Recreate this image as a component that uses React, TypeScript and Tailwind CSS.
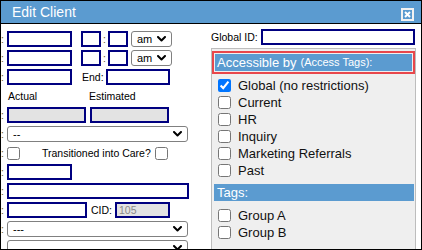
import React from "react";

const navyInput = "h-[16px] border-2 border-[#000080] bg-white";
const grayInput = "h-[16px] border-2 border-[#000080] bg-[#e3e3e3]";
const row = "flex h-[16px] shrink-0 items-center";

function Colon() {
    return <span className="w-[6px] shrink-0 text-[10.5px] leading-none text-[#6b5a2a]">:</span>;
}

function Select({ value, width }: { value: string; width: string }) {
    return (
        <div className={`${width} h-[16px] flex items-center justify-between rounded-[3px] border border-[#808080] bg-white pl-[5px] pr-[5px]`}>
            <span className="text-[11px] leading-none text-black">{value}</span>
            <svg width="9" height="6" viewBox="0 0 9 6" className="shrink-0">
                <path d="M1 1 L4.5 4.5 L8 1" fill="none" stroke="#000" strokeWidth="2" strokeLinecap="round" strokeLinejoin="round" />
            </svg>
        </div>
    );
}

function Check({ label, checked = false }: { label: string; checked?: boolean }) {
    return (
        <label className="flex h-[17px] items-center gap-[7px]">
            <input type="checkbox" defaultChecked={checked} className="m-0 h-[13px] w-[13px] shrink-0" />
            <span className="text-[13px] leading-none text-[#111]">{label}</span>
        </label>
    );
}

export default function App() {
    return (
        <div className="flex h-[250px] w-[422px] flex-col overflow-hidden border border-black bg-white font-['Liberation_Sans',Arial,sans-serif]">
            {/* Title bar */}
            <div className="flex h-[23px] shrink-0 items-center justify-between border-b border-black bg-[#5b9bd0] pl-[11px] pr-[7px]">
                <span className="text-[14px] leading-none text-white">Edit Client</span>
                <div className="mt-[4px] flex h-[13px] w-[13px] items-center justify-center border-2 border-[#f2f2f2] bg-[#5b9bd0]">
                    <svg width="7" height="7" viewBox="0 0 7 7">
                        <path d="M1 1 L6 6 M6 1 L1 6" stroke="#fff" strokeWidth="2" />
                    </svg>
                </div>
            </div>

            <div className="flex min-h-0 flex-1">
                {/* Left column */}
                <div className="flex w-[204px] shrink-0 flex-col gap-[3px] pt-[7px]">
                    <div className={row}>
                        <Colon />
                        <input className={`${navyInput} w-[65px]`} />
                        <input className={`${navyInput} ml-[9px] w-[20px]`} />
                        <span className="w-[7px] text-center text-[10.5px] leading-none text-[#6b5a2a]">:</span>
                        <input className={`${navyInput} w-[20px]`} />
                        <div className="ml-[3px]"><Select value="am" width="w-[41px]" /></div>
                    </div>
                    <div className={row}>
                        <Colon />
                        <input className={`${navyInput} w-[65px]`} />
                        <input className={`${navyInput} ml-[9px] w-[20px]`} />
                        <span className="w-[7px] text-center text-[10.5px] leading-none text-[#6b5a2a]">:</span>
                        <input className={`${navyInput} w-[20px]`} />
                        <div className="ml-[3px]"><Select value="am" width="w-[41px]" /></div>
                    </div>
                    <div className={row}>
                        <Colon />
                        <input className={`${navyInput} w-[65px]`} />
                        <span className="ml-[10px] w-[24px] text-[10.5px] leading-none text-black">End:</span>
                        <input className={`${navyInput} w-[64px]`} />
                    </div>
                    <div className="flex h-[16px] shrink-0 items-center pl-[7px] text-[10.5px] leading-none text-black">
                        <span className="w-[81px]">Actual</span>
                        <span>Estimated</span>
                    </div>
                    <div className={row}>
                        <Colon />
                        <input readOnly className={`${grayInput} w-[79px]`} />
                        <input readOnly className={`${grayInput} ml-[4px] w-[79px]`} />
                    </div>
                    <div className={row}>
                        <Colon />
                        <Select value="--" width="w-[181px]" />
                    </div>
                    <div className={row}>
                        <Colon />
                        <input type="checkbox" className="m-0 h-[13px] w-[13px]" />
                        <span className="ml-[22px] text-[10.5px] leading-none text-black">Transitioned into Care?</span>
                        <input type="checkbox" className="m-0 ml-[4px] h-[13px] w-[13px]" />
                    </div>
                    <div className={row}>
                        <Colon />
                        <input className={`${navyInput} w-[65px]`} />
                    </div>
                    <div className={row}>
                        <Colon />
                        <input className={`${navyInput} w-[182px]`} />
                    </div>
                    <div className={row}>
                        <Colon />
                        <input className={`${navyInput} w-[80px]`} />
                        <span className="ml-[4px] w-[24px] text-[10.5px] leading-none text-black">CID:</span>
                        <input readOnly value="105" className={`${grayInput} w-[55px] pl-[2px] text-[10.5px] text-[#8a8a8a]`} />
                    </div>
                    <div className={row}>
                        <Colon />
                        <Select value="---" width="w-[181px]" />
                    </div>
                    <div className={row}>
                        <span className="w-[6px] shrink-0" />
                        <Select value="" width="w-[181px]" />
                    </div>
                </div>

                {/* Right column */}
                <div className="ml-[6px] flex w-[205px] shrink-0 flex-col pt-[5px]">
                    <div className={row}>
                        <span className="w-[50px] text-[10.5px] leading-none text-black">Global ID:</span>
                        <input className="h-[16px] w-[154px] border-2 border-[#000080] bg-white" />
                    </div>
                    <div className="mt-[3px] h-[220px] shrink-0 border border-[#bdbdbd] bg-[#efefef] pt-[2px]">
                        <div className="border-2 border-[#e8474c] p-[1px]">
                            <div className="flex h-[17px] items-center gap-[4px] bg-[#5b9bd0] pl-[2px] text-white">
                                <span className="text-[13px] leading-none">Accessible by</span>
                                <span className="text-[11px] leading-none">(Access Tags):</span>
                            </div>
                        </div>
                        <div className="flex flex-col pl-[6px] pt-[3px]">
                            <Check label="Global (no restrictions)" checked />
                            <Check label="Current" />
                            <Check label="HR" />
                            <Check label="Inquiry" />
                            <Check label="Marketing Referrals" />
                            <Check label="Past" />
                        </div>
                        <div className="ml-[2px] mr-[1px] mt-[5px] flex h-[17px] items-center bg-[#5b9bd0] pl-[3px] text-[13px] leading-none text-white">
                            Tags:
                        </div>
                        <div className="flex flex-col pl-[6px] pt-[6px]">
                            <Check label="Group A" />
                            <Check label="Group B" />
                        </div>
                    </div>
                </div>
            </div>
        </div>
    );
}
